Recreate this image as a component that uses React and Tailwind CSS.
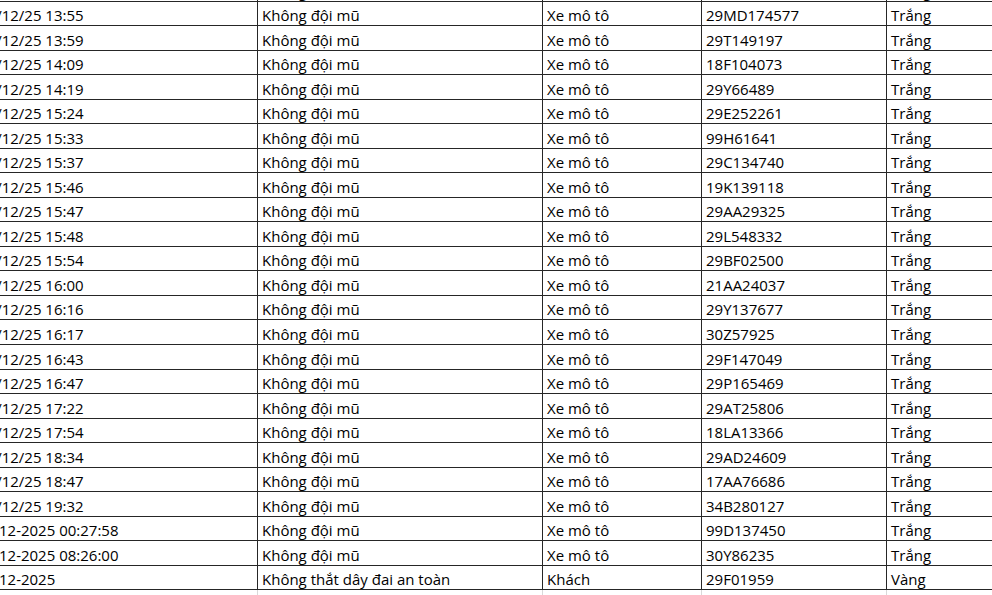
import React from 'react';

const rows = [
  ['10/12/25 13:55', 'Không đội mũ', 'Xe mô tô', '29MD174577', 'Trắng'],
  ['10/12/25 13:59', 'Không đội mũ', 'Xe mô tô', '29T149197', 'Trắng'],
  ['10/12/25 14:09', 'Không đội mũ', 'Xe mô tô', '18F104073', 'Trắng'],
  ['10/12/25 14:19', 'Không đội mũ', 'Xe mô tô', '29Y66489', 'Trắng'],
  ['10/12/25 15:24', 'Không đội mũ', 'Xe mô tô', '29E252261', 'Trắng'],
  ['10/12/25 15:33', 'Không đội mũ', 'Xe mô tô', '99H61641', 'Trắng'],
  ['10/12/25 15:37', 'Không đội mũ', 'Xe mô tô', '29C134740', 'Trắng'],
  ['10/12/25 15:46', 'Không đội mũ', 'Xe mô tô', '19K139118', 'Trắng'],
  ['10/12/25 15:47', 'Không đội mũ', 'Xe mô tô', '29AA29325', 'Trắng'],
  ['10/12/25 15:48', 'Không đội mũ', 'Xe mô tô', '29L548332', 'Trắng'],
  ['10/12/25 15:54', 'Không đội mũ', 'Xe mô tô', '29BF02500', 'Trắng'],
  ['10/12/25 16:00', 'Không đội mũ', 'Xe mô tô', '21AA24037', 'Trắng'],
  ['10/12/25 16:16', 'Không đội mũ', 'Xe mô tô', '29Y137677', 'Trắng'],
  ['10/12/25 16:17', 'Không đội mũ', 'Xe mô tô', '30Z57925', 'Trắng'],
  ['10/12/25 16:43', 'Không đội mũ', 'Xe mô tô', '29F147049', 'Trắng'],
  ['10/12/25 16:47', 'Không đội mũ', 'Xe mô tô', '29P165469', 'Trắng'],
  ['10/12/25 17:22', 'Không đội mũ', 'Xe mô tô', '29AT25806', 'Trắng'],
  ['10/12/25 17:54', 'Không đội mũ', 'Xe mô tô', '18LA13366', 'Trắng'],
  ['10/12/25 18:34', 'Không đội mũ', 'Xe mô tô', '29AD24609', 'Trắng'],
  ['10/12/25 18:47', 'Không đội mũ', 'Xe mô tô', '17AA76686', 'Trắng'],
  ['10/12/25 19:32', 'Không đội mũ', 'Xe mô tô', '34B280127', 'Trắng'],
  ['10-12-2025 00:27:58', 'Không đội mũ', 'Xe mô tô', '99D137450', 'Trắng'],
  ['10-12-2025 08:26:00', 'Không đội mũ', 'Xe mô tô', '30Y86235', 'Trắng'],
  ['10-12-2025', 'Không thắt dây đai an toàn', 'Khách', '29F01959', 'Vàng'],
];

const Row = ({ cells }) => {
  // text dates typed with dashes sit a little further left in the sheet
  const dashed = cells[0].includes('-');
  return (
    <div className="grid grid-cols-[281px_285px_159px_185px_120px] h-[24.54px] border-b border-[#262626]">
      {cells.map((c, i) => (
        <div
          key={i}
          className={`flex items-end pb-[2px] leading-none whitespace-nowrap overflow-hidden ${
            i === 0 ? (dashed ? 'pl-0' : 'pl-[2px]') : 'pl-[4px]'
          } ${i < 4 ? 'border-r border-[#262626]' : ''}`}
        >
          {c}
        </div>
      ))}
    </div>
  );
};

export default function App() {
  return (
    <div className="w-[992px] h-[595px] overflow-hidden bg-white">
      <div
        className="ml-[-23px] mt-[-23px] text-[15px] text-black"
        style={{ fontFamily: '"Open Sans", "Noto Sans", sans-serif' }}
      >
        {/* row cut off above */}
        <Row cells={['10/12/25 13:50', 'Không đội mũ', 'Xe mô tô', '29X000000', 'Trắng']} />
        {rows.map((r, i) => (
          <Row key={i} cells={r} />
        ))}
        {/* empty row below, only light gridlines */}
        <div className="grid grid-cols-[281px_285px_159px_185px_120px] h-[24.54px]">
          <div className="border-r border-[#d9d9d9]" />
          <div className="border-r border-[#d9d9d9]" />
          <div className="border-r border-[#d9d9d9]" />
          <div className="border-r border-[#d9d9d9]" />
          <div />
        </div>
      </div>
    </div>
  );
}
